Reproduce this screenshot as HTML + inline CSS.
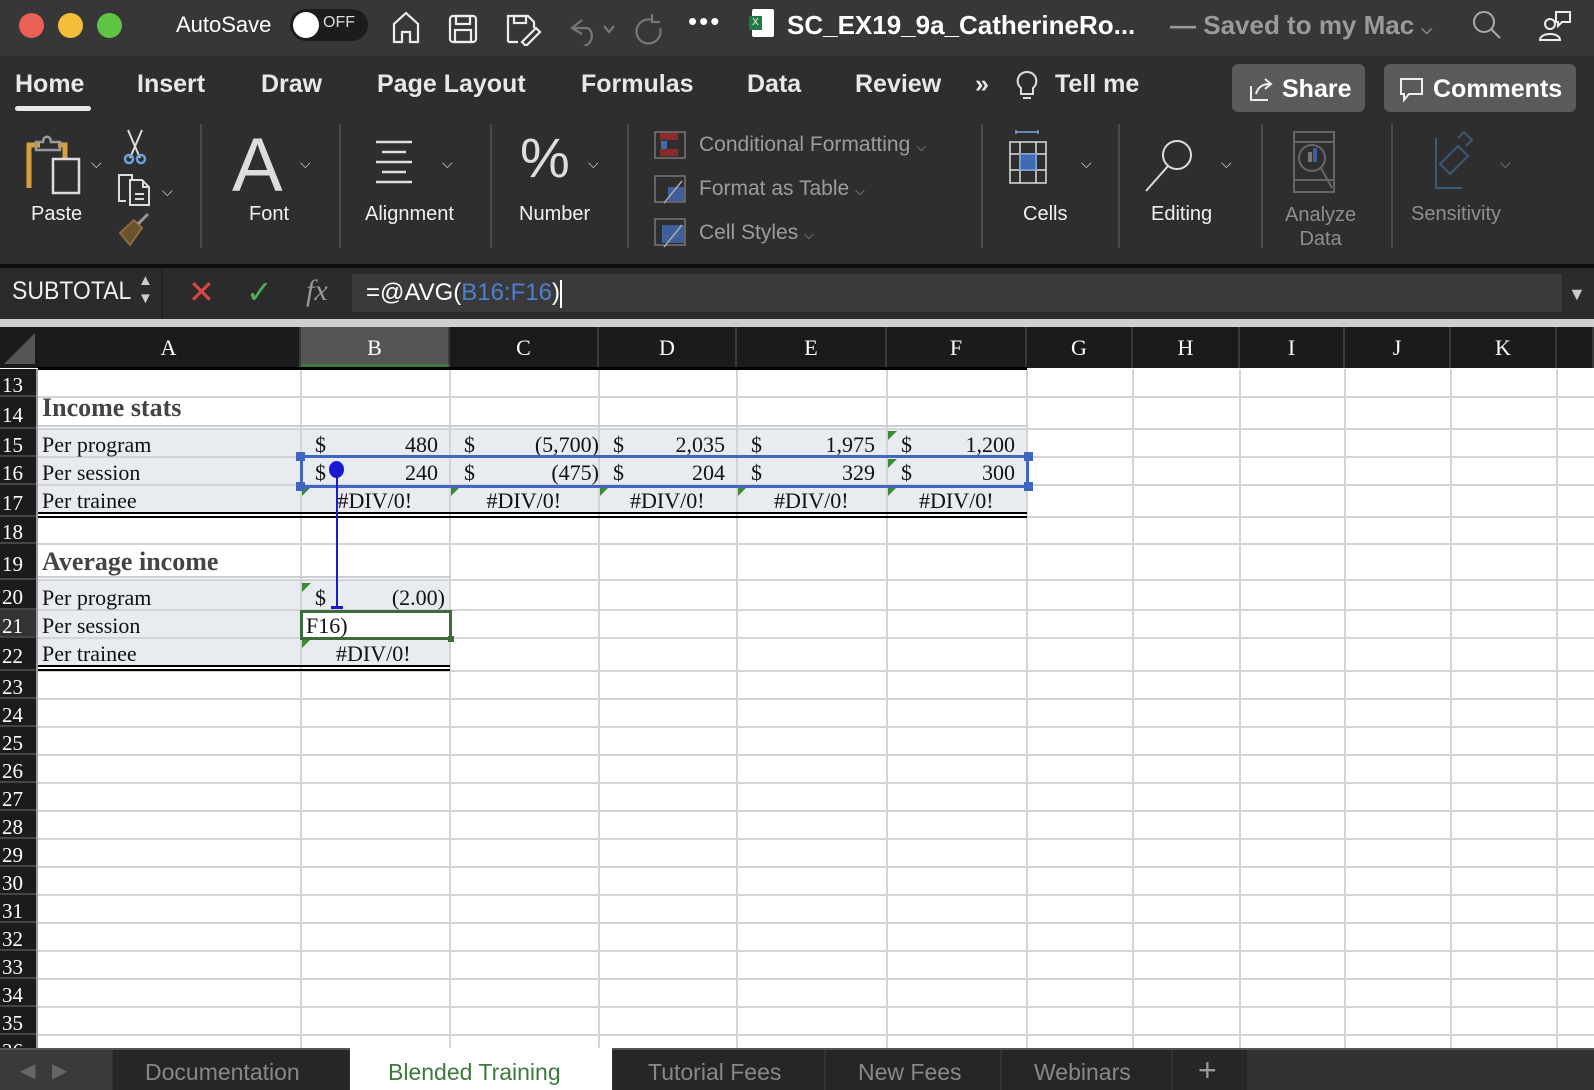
<!DOCTYPE html>
<html><head><meta charset="utf-8"><style>
*{margin:0;padding:0;box-sizing:border-box}
body{width:1594px;height:1090px;overflow:hidden;background:#fff;font-family:"Liberation Sans",sans-serif;position:relative}
.a{position:absolute}
.top{left:0;top:0;width:1594px;height:270px;background:#2e2e2e}
.w{color:#fff}
.g{color:#9a9a9a}
.tab{font-size:25px;color:#e8e8e8;top:70px;font-weight:bold}
.lbl{font-size:20px;color:#f0f0f0;text-align:center}
.sep{width:2px;background:#4a4a4a;top:124px;height:124px}
.chev{font-size:14px;color:#ddd}
.rh{left:0;width:36px;background:#1b1b1b;color:#fff;font-family:"Liberation Serif",serif;font-size:21px;padding-left:2px;line-height:28px}
.ch{top:327px;height:41px;background:#1b1b1b;color:#fff;font-family:"Liberation Serif",serif;font-size:22px;text-align:center;line-height:41px;border-right:2px solid #3a3a3a}
.c{font-family:"Liberation Serif",serif;font-size:22px;color:#111;white-space:nowrap}
.gl{background:#d4d4d4}
.sh{background:#e8ebef}
.tri{width:0;height:0;border-top:9px solid #3d8a36;border-right:9px solid transparent}
</style></head><body>
<div class="a top"></div>
<div class="a" style="left:0;top:0;width:1594px;height:56px;background:#373737"></div>
<!-- traffic lights -->
<div class="a" style="left:19px;top:13px;width:25px;height:25px;border-radius:50%;background:#ec5f57"></div>
<div class="a" style="left:58px;top:13px;width:25px;height:25px;border-radius:50%;background:#f4bd3a"></div>
<div class="a" style="left:97px;top:13px;width:25px;height:25px;border-radius:50%;background:#5fc344"></div>
<div class="a w" style="left:176px;top:12px;font-size:22px">AutoSave</div>
<div class="a" style="left:290px;top:9px;width:78px;height:32px;border-radius:16px;background:#1c1c1c"></div>
<div class="a" style="left:293px;top:12px;width:26px;height:26px;border-radius:50%;background:#fff"></div>
<div class="a w" style="left:323px;top:14px;font-size:16px;color:#ddd">OFF</div>
<svg class="a" style="left:390px;top:8px" width="400" height="38" fill="none" stroke="#eee" stroke-width="2.2">
<path d="M4 34V16L16 5L28 16V34H20V24H12V34Z"/>
<rect x="60" y="8" width="26" height="26" rx="3"/><rect x="66" y="8" width="14" height="8"/><rect x="65" y="22" width="16" height="12"/>
<path d="M118 34V8H138L144 14V20M118 34H128"/><rect x="124" y="8" width="12" height="7"/><path d="M132 34L146 20L150 24L136 38Z"/>
<path stroke="#777" d="M192 12L182 20L192 26M182 20H196C204 20 204 36 194 38"/><path stroke="#777" d="M214 18L219 24L224 18"/>
<path stroke="#777" d="M262 12A12 12 0 1 0 270 20M262 6V14H270"/>
</svg>
<div class="a w" style="left:688px;top:6px;font-size:26px;letter-spacing:2px">•••</div>
<div class="a" style="left:752px;top:9px;width:22px;height:28px;background:#fff;border-radius:2px"></div>
<div class="a" style="left:749px;top:16px;width:13px;height:14px;background:#1f7a43;color:#fff;font-size:10px;text-align:center;line-height:14px">X</div>
<div class="a w" style="left:787px;top:10px;font-size:26px;font-weight:bold">SC_EX19_9a_CatherineRo...</div>
<div class="a g" style="left:1170px;top:10px;font-size:26px;font-weight:bold">— Saved to my Mac <span style="font-size:14px">⌵</span></div>
<svg class="a" style="left:1470px;top:8px" width="110" height="36" fill="none" stroke="#aaa" stroke-width="2"><circle cx="14" cy="14" r="10"/><path d="M21 21L30 30"/><circle stroke="#eee" cx="80" cy="16" r="5"/><path stroke="#eee" d="M70 32C70 24 90 24 90 32Z"/><path stroke="#eee" d="M86 4H100V14H92L88 18V14H86Z"/></svg>
<!-- tabs -->
<div class="a tab" style="left:15px">Home</div>
<div class="a" style="left:15px;top:106px;width:76px;height:5px;border-radius:3px;background:#e8e8e8"></div>
<div class="a tab" style="left:137px">Insert</div>
<div class="a tab" style="left:261px">Draw</div>
<div class="a tab" style="left:377px">Page Layout</div>
<div class="a tab" style="left:581px">Formulas</div>
<div class="a tab" style="left:747px">Data</div>
<div class="a tab" style="left:855px">Review</div>
<div class="a tab" style="left:975px">»</div>
<svg class="a" style="left:1014px;top:70px" width="26" height="34" fill="none" stroke="#ddd" stroke-width="2"><path d="M13 2A9 9 0 0 0 7 18V24H19V18A9 9 0 0 0 13 2Z M9 28H17"/></svg>
<div class="a tab" style="left:1055px">Tell me</div>
<div class="a" style="left:1232px;top:64px;width:133px;height:48px;border-radius:6px;background:#5a5a5a"></div>
<div class="a w" style="left:1282px;top:75px;font-size:25px;font-weight:bold">Share</div>
<svg class="a" style="left:1248px;top:76px" width="26" height="26" fill="none" stroke="#eee" stroke-width="2"><path d="M3 10V24H20M8 18C10 10 16 8 22 8M17 3L23 8L17 13"/></svg>
<div class="a" style="left:1384px;top:64px;width:192px;height:48px;border-radius:6px;background:#5a5a5a"></div>
<svg class="a" style="left:1398px;top:76px" width="28" height="28" fill="none" stroke="#eee" stroke-width="2"><path d="M3 3H24V18H11L6 24V18H3Z"/></svg>
<div class="a w" style="left:1433px;top:75px;font-size:25px;font-weight:bold">Comments</div>
<!-- ribbon: clipboard group -->
<svg class="a" style="left:0;top:120px" width="180" height="140" fill="none" stroke-width="2.5">
<path stroke="#d8a03c" stroke-width="5" d="M29 68V25H40M58 25H65V38"/>
<path stroke="#999" d="M36 30V22H43C43 15 51 15 51 22H60V30Z"/>
<rect stroke="#ddd" stroke-width="2.5" x="53" y="39" width="26" height="34"/>
<path stroke="#ddd" stroke-width="2" d="M128 10L140 38M142 10L130 38"/>
<circle stroke="#6fa0e0" cx="129" cy="39" r="4"/><circle stroke="#6fa0e0" cx="141" cy="39" r="4"/>
<path stroke="#ddd" stroke-width="2" d="M126 81H119V55H132V60M130 60H142L149 67V85H130Z M143 60V67H149M135 74H144M135 79H144"/>
<path stroke="#8a6a3e" stroke-width="2" d="M120 113L134 100L142 108L130 125Z" fill="#6b532f"/><path stroke="#999" stroke-width="3" d="M138 104L148 94"/>
</svg>
<div class="a chev" style="left:91px;top:155px">⌵</div><div class="a chev" style="left:162px;top:183px">⌵</div>
<div class="a lbl" style="left:31px;top:203px">Paste</div>
<div class="a sep" style="left:200px"></div>
<div class="a" style="left:232px;top:122px;font-size:76px;color:#ddd;font-weight:lighter">A</div>
<div class="a chev" style="left:300px;top:155px">⌵</div>
<div class="a lbl" style="left:249px;top:203px">Font</div>
<div class="a sep" style="left:339px"></div>
<svg class="a" style="left:374px;top:138px" width="60" height="48" stroke="#ddd" stroke-width="2.5"><path d="M2 4H38M8 14H32M2 24H38M8 34H32M2 44H38"/></svg>
<div class="a chev" style="left:442px;top:155px">⌵</div>
<div class="a lbl" style="left:365px;top:203px">Alignment</div>
<div class="a sep" style="left:490px"></div>
<div class="a" style="left:520px;top:125px;font-size:56px;color:#ddd">%</div>
<div class="a chev" style="left:588px;top:155px">⌵</div>
<div class="a lbl" style="left:519px;top:203px">Number</div>
<div class="a sep" style="left:627px"></div>
<svg class="a" style="left:654px;top:131px" width="34" height="120" fill="none" stroke="#777" stroke-width="1.5">
<rect x="1" y="1" width="30" height="26"/><rect x="6" y="2" width="18" height="7" fill="#8b2c2c" stroke="none"/><rect x="6" y="18" width="18" height="7" fill="#8b2c2c" stroke="none"/><rect x="7" y="10" width="6" height="8" fill="#3f6aa5" stroke="none"/>
<rect x="1" y="45" width="30" height="26"/><rect x="14" y="56" width="16" height="14" fill="#3f5f9a" stroke="none"/><path stroke="#aaa" d="M10 72L28 50"/>
<rect x="1" y="88" width="30" height="26"/><rect x="8" y="94" width="22" height="18" fill="#3f5f9a" stroke="none"/><path stroke="#aaa" d="M10 116L28 94"/>
</svg>
<div class="a" style="left:699px;top:133px;font-size:21px;color:#9c9c9c">Conditional Formatting <span style="font-size:13px">⌵</span></div>
<div class="a" style="left:699px;top:177px;font-size:21px;color:#9c9c9c">Format as Table <span style="font-size:13px">⌵</span></div>
<div class="a" style="left:699px;top:221px;font-size:21px;color:#9c9c9c">Cell Styles <span style="font-size:13px">⌵</span></div>
<div class="a sep" style="left:981px"></div>
<svg class="a" style="left:1008px;top:130px" width="44" height="56" fill="none" stroke="#ddd" stroke-width="1.5"><path stroke="#7aa6de" d="M8 2H30M8 0V4M30 0V4"/><rect x="2" y="12" width="36" height="41"/><path d="M2 24H38M2 40H38M12 12V53M28 12V53"/><rect x="12" y="24" width="16" height="16" fill="#3f6ab4" stroke="#7aa6de"/></svg>
<div class="a chev" style="left:1081px;top:155px">⌵</div>
<div class="a lbl" style="left:1023px;top:203px">Cells</div>
<div class="a sep" style="left:1118px"></div>
<svg class="a" style="left:1144px;top:133px" width="60" height="60" fill="none" stroke="#ddd" stroke-width="2"><circle cx="33" cy="22" r="14"/><path d="M24 33L2 58"/></svg>
<div class="a chev" style="left:1221px;top:155px">⌵</div>
<div class="a lbl" style="left:1151px;top:203px">Editing</div>
<div class="a sep" style="left:1261px"></div>
<svg class="a" style="left:1292px;top:130px" width="44" height="66" fill="none" stroke="#666" stroke-width="2"><rect x="2" y="2" width="40" height="60"/><path d="M2 12H42M2 50H42"/><circle cx="20" cy="28" r="13"/><path d="M29 38L40 58"/><rect x="16" y="22" width="4" height="10" fill="#777" stroke="none"/><rect x="21" y="18" width="4" height="14" fill="#3f5f9a" stroke="none"/></svg>
<div class="a" style="left:1285px;top:203px;font-size:20px;color:#8e8e8e;text-align:center;line-height:24px">Analyze<br>Data</div>
<div class="a sep" style="left:1391px"></div>
<svg class="a" style="left:1434px;top:130px" width="50" height="60" fill="none" stroke="#3d5877" stroke-width="2"><path d="M2 8V58H28"/><path d="M6 34L24 16L34 26L16 44Z"/><path d="M24 8L30 2L38 10L32 16"/></svg>
<div class="a chev" style="left:1500px;top:155px;color:#888">⌵</div>
<div class="a" style="left:1411px;top:203px;font-size:20px;color:#8e8e8e">Sensitivity</div>
<!-- dark line + formula bar -->
<div class="a" style="left:0;top:264px;width:1594px;height:4px;background:#0d0d0d"></div>
<div class="a" style="left:0;top:268px;width:1594px;height:51px;background:#2b2b2b"></div>
<div class="a w" style="left:12px;top:277px;font-size:25px;transform:scaleX(.92);transform-origin:left;color:#eee">SUBTOTAL</div>
<div class="a" style="left:138px;top:272px;font-size:15px;color:#ccc;line-height:18px">▲<br>▼</div>
<div class="a" style="left:161px;top:268px;width:2px;height:51px;background:#222"></div>
<div class="a" style="left:188px;top:273px;font-size:32px;color:#d44">✕</div>
<div class="a" style="left:246px;top:273px;font-size:32px;color:#4caf50">✓</div>
<div class="a" style="left:306px;top:274px;font-family:'Liberation Serif',serif;font-style:italic;font-size:30px;color:#999">fx</div>
<div class="a" style="left:352px;top:274px;width:1210px;height:38px;background:#3a3a3a"></div>
<div class="a w" style="left:366px;top:279px;font-size:24px">=@AVG(<span style="color:#4f7fd0">B16:F16</span>)<span style="display:inline-block;width:2px;height:28px;background:#fff;vertical-align:middle"></span></div>
<div class="a" style="left:1568px;top:284px;font-size:18px;color:#ccc">▼</div>
<div class="a" style="left:0;top:319px;width:1594px;height:8px;background:#cfcfcf"></div>
<!-- column headers -->
<div class="a" style="left:0;top:327px;width:38px;height:41px;background:#1b1b1b"></div>
<div class="a" style="left:4px;top:333px;width:0;height:0;border-bottom:31px solid #555;border-left:31px solid transparent"></div>
<div id="cols"></div>
<div id="grid"></div>
<!-- tabs -->
<div class="a" style="left:0;top:1048px;width:1594px;height:42px;background:#323232;border-top:2px solid #555"></div>
<div class="a" style="left:0;top:1050px;width:112px;height:40px;background:#3a3a3a"></div>
<div class="a" style="left:20px;top:1058px;font-size:20px;color:#666">◀&nbsp;&nbsp;&nbsp;▶</div>
<div class="a" style="left:113px;top:1050px;width:236px;height:40px;background:#262626"></div>
<div class="a" style="left:145px;top:1059px;font-size:23px;color:#888">Documentation</div>
<div class="a" style="left:350px;top:1048px;width:262px;height:42px;background:#fff"></div>
<div class="a" style="left:388px;top:1059px;font-size:23px;color:#3c7a3c">Blended Training</div>
<div class="a" style="left:613px;top:1050px;width:211px;height:40px;background:#262626"></div>
<div class="a" style="left:648px;top:1059px;font-size:23px;color:#888">Tutorial Fees</div>
<div class="a" style="left:826px;top:1050px;width:174px;height:40px;background:#262626"></div>
<div class="a" style="left:858px;top:1059px;font-size:23px;color:#888">New Fees</div>
<div class="a" style="left:1002px;top:1050px;width:169px;height:40px;background:#262626"></div>
<div class="a" style="left:1034px;top:1059px;font-size:23px;color:#888">Webinars</div>
<div class="a" style="left:1173px;top:1050px;width:74px;height:40px;background:#262626"></div>
<div class="a" style="left:1198px;top:1052px;font-size:32px;color:#999">+</div>
<script>
var X=[38,301,450,599,737,887,1027,1133,1240,1345,1451,1557,1594];
var L="ABCDEFGHIJK",h="";
for(var i=0;i<11;i++){h+='<div class="a ch" style="left:'+X[i]+'px;width:'+(X[i+1]-X[i])+'px;'+(i==1?'background:#555;border-bottom:4px solid #3c7a3c':'')+'">'+L[i]+'</div>';}
h+='<div class="a ch" style="left:1557px;width:37px"></div>';
document.getElementById('cols').innerHTML=h;
var R=[[13,369,397],[14,397,429],[15,429,457],[16,457,485],[17,485,517],[18,517,544],[19,544,580],[20,580,610],[21,610,638],[22,638,671]];
for(var n=23;n<=36;n++){R.push([n,671+(n-23)*28,699+(n-23)*28]);}
var g="";
g+='<div class="a sh" style="left:38px;top:429px;width:989px;height:84px"></div>';
g+='<div class="a sh" style="left:38px;top:580px;width:412px;height:86px"></div>';
g+='<div class="a" style="left:301px;top:610px;width:149px;height:28px;background:#fff"></div>';
for(var i=1;i<12;i++)g+='<div class="a gl" style="left:'+(X[i]-1)+'px;top:369px;width:2px;height:680px"></div>';
for(var k=0;k<R.length;k++){var r=R[k];
g+='<div class="a gl" style="left:38px;top:'+(r[2]-1)+'px;width:1556px;height:2px"></div>';
g+='<div class="a rh" style="top:'+r[1]+'px;height:'+(r[2]-r[1])+'px;line-height:'+(r[2]-r[1]+4)+'px;border-bottom:2px solid #444'+(r[0]==21?';background:#333':'')+'">'+r[0]+'</div>';}
g+='<div class="a" style="left:36px;top:369px;width:2px;height:680px;background:#999"></div>';
g+='<div class="a" style="left:38px;top:367px;width:989px;height:3px;background:#000"></div>';
g+='<div class="a" style="left:38px;top:425px;width:989px;height:2px;background:#c9ced6"></div>';
g+='<div class="a" style="left:38px;top:576px;width:412px;height:2px;background:#c9ced6"></div>';
g+='<div class="a" style="left:38px;top:512px;width:989px;height:2px;background:#000"></div><div class="a" style="left:38px;top:516px;width:989px;height:2px;background:#000"></div>';
g+='<div class="a" style="left:38px;top:665px;width:412px;height:2px;background:#000"></div><div class="a" style="left:38px;top:669px;width:412px;height:2px;background:#000"></div>';
function t(x,y,s,st){g+='<div class="a c" style="left:'+x+'px;top:'+y+'px;'+(st||'')+'">'+s+'</div>';}
function rt(x,y,s){g+='<div class="a c" style="right:'+(1594-x)+'px;top:'+y+'px">'+s+'</div>';}
t(42,393,'Income stats','font-size:26px;font-weight:bold;color:#444');
t(42,432,'Per program');t(42,460,'Per session');t(42,488,'Per trainee');
t(42,547,'Average income','font-size:26px;font-weight:bold;color:#444');
t(42,585,'Per program');t(42,613,'Per session');t(42,641,'Per trainee');
var C=[[301,450,'480','240'],[450,599,'(5,700)','(475)'],[599,737,'2,035','204'],[737,887,'1,975','329'],[887,1027,'1,200','300']];
for(var i=0;i<5;i++){var c=C[i];t(c[0]+14,432,'$');t(c[0]+14,460,'$');rt(c[1]-(i==1?0:12),432,c[2]);rt(c[1]-(i==1?0:12),460,c[3]);
t(c[0]+(c[1]-c[0])/2-38,488,'#DIV/0!');g+='<div class="a tri" style="left:'+(c[0]+1)+'px;top:487px"></div>';}
g+='<div class="a tri" style="left:888px;top:431px"></div><div class="a tri" style="left:888px;top:459px"></div>';
t(315,585,'$');rt(445,585,'(2.00)');g+='<div class="a tri" style="left:302px;top:583px"></div>';
t(336,641,'#DIV/0!');g+='<div class="a tri" style="left:302px;top:639px"></div>';
g+='<div class="a" style="left:300px;top:610px;width:152px;height:30px;border:3px solid #3c6b3c"></div>';
g+='<div class="a" style="left:448px;top:636px;width:6px;height:6px;background:#3c6b3c"></div>';
t(306,613,'F16)');
g+='<div class="a" style="left:300px;top:455px;width:729px;height:33px;border:3px solid #4166c2"></div>';
g+='<div class="a" style="left:296px;top:452px;width:9px;height:9px;background:#4166c2"></div><div class="a" style="left:1024px;top:452px;width:9px;height:9px;background:#4166c2"></div>';
g+='<div class="a" style="left:296px;top:482px;width:9px;height:9px;background:#4166c2"></div><div class="a" style="left:1024px;top:482px;width:9px;height:9px;background:#4166c2"></div>';
g+='<div class="a" style="left:336px;top:464px;width:2px;height:144px;background:#1a1ad0"></div>';
g+='<div class="a" style="left:329px;top:461px;width:15px;height:17px;border-radius:50%;background:#1a1ad0"></div>';
g+='<div class="a" style="left:331px;top:606px;width:12px;height:3px;background:#1a1ad0"></div>';
document.getElementById('grid').innerHTML=g;
</script>
</body></html>
